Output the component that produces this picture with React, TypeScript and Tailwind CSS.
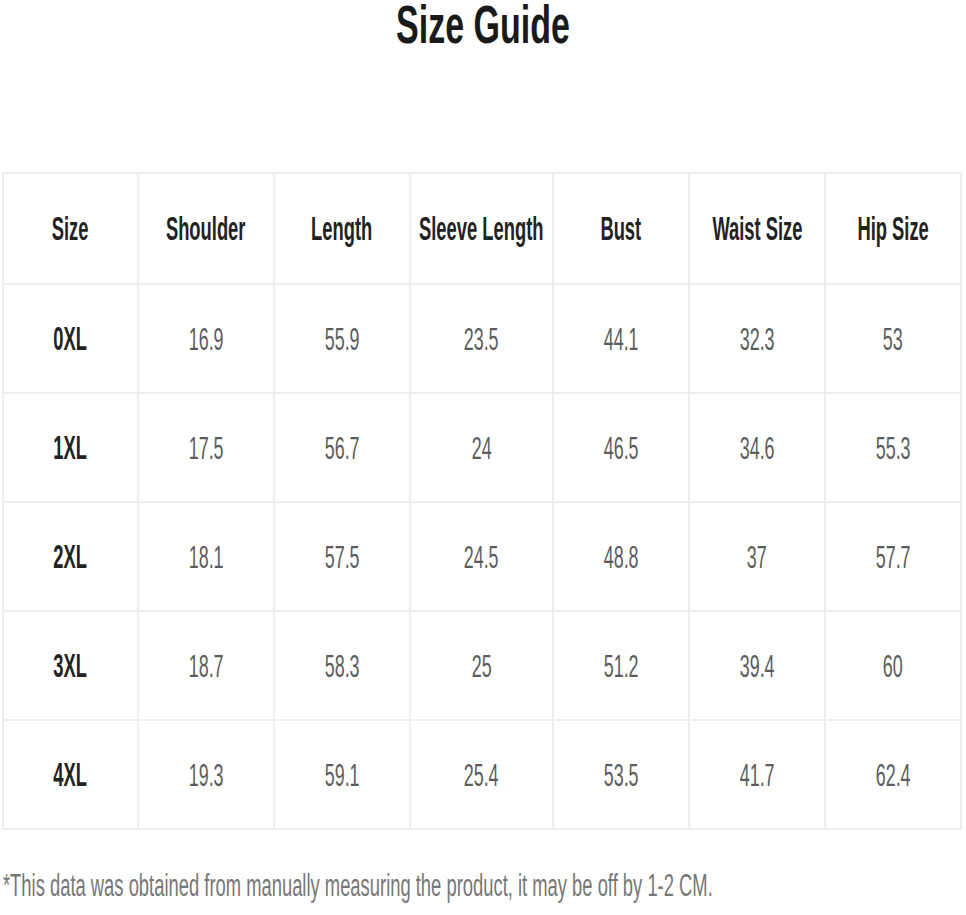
const headers = ["Size", "Shoulder", "Length", "Sleeve Length", "Bust", "Waist Size", "Hip Size"];

const rows = [
  ["0XL", "16.9", "55.9", "23.5", "44.1", "32.3", "53"],
  ["1XL", "17.5", "56.7", "24", "46.5", "34.6", "55.3"],
  ["2XL", "18.1", "57.5", "24.5", "48.8", "37", "57.7"],
  ["3XL", "18.7", "58.3", "25", "51.2", "39.4", "60"],
  ["4XL", "19.3", "59.1", "25.4", "53.5", "41.7", "62.4"],
];

const Cell: React.FC<{ children: React.ReactNode; head?: boolean }> = ({ children, head }) => (
  <div className="flex items-center justify-center bg-white overflow-hidden">
    <span
      className={`inline-block whitespace-nowrap ${
        head ? "text-[34px] font-bold text-[#222] scale-x-[0.54]" : "text-[32px] text-[#5c5c5c] scale-x-[0.56]"
      }`}
    >
      {children}
    </span>
  </div>
);

export default function App() {
  return (
    <div className="w-[966px] h-[915px] bg-white overflow-hidden font-['Liberation_Sans',Arial,sans-serif]">
      <h1 className="text-center text-[54px] leading-[48px] font-bold text-[#1a1a1a]">
        <span className="inline-block whitespace-nowrap scale-x-[0.63]">Size Guide</span>
      </h1>

      <div className="mt-[124px] ml-[2px] w-[960px] grid grid-cols-[133px_134px_134px_141px_134px_134px_134px] grid-rows-[109px_repeat(5,107px)] gap-[2px] p-[2px] bg-[#eeeeee]">
        {headers.map((h) => (
          <Cell key={h} head>
            {h}
          </Cell>
        ))}
        {rows.map((r) =>
          r.map((c, i) => (
            <Cell key={r[0] + i} head={i === 0}>
              {c}
            </Cell>
          ))
        )}
      </div>

      <p className="mt-[38px] text-[31px] leading-[36px] text-[#777]">
        <span className="inline-block whitespace-nowrap origin-left scale-x-[0.593] pl-[5px]">
          *This data was obtained from manually measuring the product, it may be off by 1-2 CM.
        </span>
      </p>
    </div>
  );
}
